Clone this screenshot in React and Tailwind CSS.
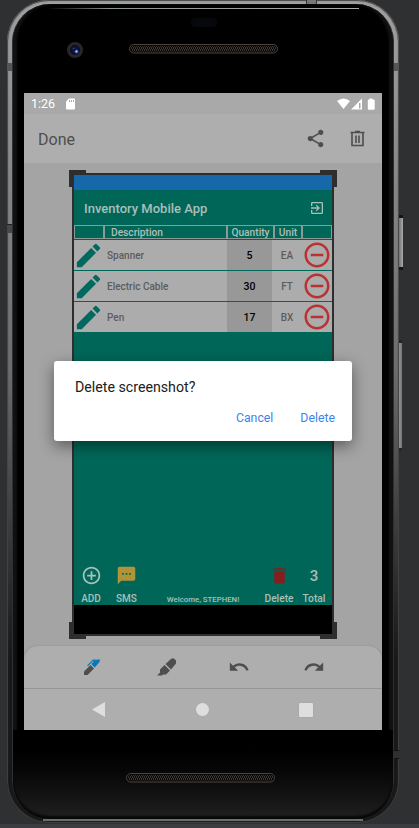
const ROWS = [
  { name: 'Spanner', qty: 5, unit: 'EA' },
  { name: 'Electric Cable', qty: 30, unit: 'FT' },
  { name: 'Pen', qty: 17, unit: 'BX' },
];

function Icon({ d, className }) {
  return (
    <svg viewBox="0 0 24 24" className={`shrink-0 fill-current ${className}`}>
      <path d={d} />
    </svg>
  );
}

const PENCIL = 'M3 17.25V21h3.75L17.81 9.94l-3.75-3.75L3 17.25zM20.71 7.04a1 1 0 0 0 0-1.41l-2.34-2.34a1 1 0 0 0-1.41 0l-1.83 1.83 3.75 3.75 1.83-1.83z';
const SHARE = 'M18 16.08c-.76 0-1.44.3-1.96.77L8.91 12.7c.05-.23.09-.46.09-.7s-.04-.47-.09-.7l7.05-4.11c.54.5 1.25.81 2.04.81 1.66 0 3-1.34 3-3s-1.34-3-3-3-3 1.34-3 3c0 .24.04.47.09.7L8.04 9.81C7.5 9.31 6.79 9 6 9c-1.66 0-3 1.34-3 3s1.34 3 3 3c.79 0 1.5-.31 2.04-.81l7.12 4.16c-.05.21-.08.43-.08.65 0 1.61 1.31 2.92 2.92 2.92s2.92-1.31 2.92-2.92-1.31-2.92-2.92-2.92z';
const UNDO = 'M12.5 8c-2.65 0-5.05.99-6.9 2.6L2 7v9h9l-3.62-3.62c1.39-1.16 3.16-1.88 5.12-1.88 3.54 0 6.55 2.31 7.6 5.5l2.37-.78C21.08 11.03 17.15 8 12.5 8z';
const REDO = 'M18.4 10.6C16.55 8.99 14.15 8 11.5 8c-4.65 0-8.58 3.03-9.96 7.22L3.9 16c1.05-3.19 4.05-5.5 7.6-5.5 1.95 0 3.73.72 5.12 1.88L13 16h9V7l-3.6 3.6z';
const EXIT = 'M10.09 15.59 11.5 17l5-5-5-5-1.41 1.41L12.67 11H3v2h9.67l-2.58 2.59zM19 3H5a2 2 0 0 0-2 2v4h2V5h14v14H5v-4H3v4a2 2 0 0 0 2 2h14a2 2 0 0 0 2-2V5a2 2 0 0 0-2-2z';
const ADD = 'M13 7h-2v4H7v2h4v4h2v-4h4v-2h-4V7zm-1-5C6.48 2 2 6.48 2 12s4.48 10 10 10 10-4.48 10-10S17.52 2 12 2zm0 18c-4.41 0-8-3.59-8-8s3.59-8 8-8 8 3.59 8 8-3.59 8-8 8z';
const REMOVE = 'M7 11v2h10v-2H7zm5-9C6.48 2 2 6.48 2 12s4.48 10 10 10 10-4.48 10-10S17.52 2 12 2zm0 18c-4.41 0-8-3.59-8-8s3.59-8 8-8 8 3.59 8 8-3.59 8-8 8z';
const SMS = 'M20 2H4a2 2 0 0 0-2 2v18l4-4h14a2 2 0 0 0 2-2V4a2 2 0 0 0-2-2zM9 11H7V9h2v2zm4 0h-2V9h2v2zm4 0h-2V9h2v2z';
const TRASH = 'M6 19a2 2 0 0 0 2 2h8a2 2 0 0 0 2-2V7H6v12zM19 4h-3.5l-1-1h-5l-1 1H5v2h14V4z';

function Speaker() {
  return (
    <svg width="149" height="10" viewBox="0 0 149 10">
      <defs>
        <pattern id="mesh" width="4" height="4" patternUnits="userSpaceOnUse">
          <path d="M0 0l2 2-2 2M2 0l2 2-2 2" fill="none" stroke="#4c443c" strokeWidth=".8" />
        </pattern>
      </defs>
      <rect x=".5" y=".5" width="148" height="8.5" rx="4.2" fill="#080706" stroke="#4b463f" />
      <rect x="2" y="2" width="145" height="5.6" rx="2.8" fill="url(#mesh)" />
    </svg>
  );
}

function StatusBar() {
  return (
    <div className="flex h-[21px] items-center bg-[#a9a9a9] pl-[7px] pr-[7px] text-white">
      <span className="w-[35px] pt-[2px] text-[12.5px] leading-none">1:26</span>
      <svg width="9" height="12" viewBox="0 0 9 12" className="fill-white">
        <path fillRule="evenodd" d="M3 .5h5Q9 .5 9 1.500V10.500Q9 11.500 8 11.500H1Q0 11.500 0 10.500V3.500zM3 2v2h1V2zm2 0v2h1V2zm2 0v2h1V2z" />
      </svg>
      <svg width="38" height="12" viewBox="0 0 38 12" className="ml-auto fill-white">
        <path d="M0 3Q6.500-2 13 3L6.500 11z" />
        <path fillRule="evenodd" d="M25 .5V11.500H14zM22 5v5.500h1.500V5z" />
        <path d="M32.500 .5h3v1H37q.7 0 .7.700V11q0 .7-.7.700h-5.500q-.7 0-.7-.7V2.200q0-.7.700-.7h1z" />
      </svg>
    </div>
  );
}

function AppBar() {
  return (
    <div className="flex h-[49px] items-center bg-[#aeaeae] pl-[14px] pr-[14px] text-[#4e4e4e]">
      <span className="mt-[3px] text-[16px] leading-none">Done</span>
      <Icon d={SHARE} className="ml-auto mr-[21px] size-[21px]" />
      <svg width="21" height="20" viewBox="0 0 21 20" fill="none" stroke="currentColor" strokeWidth="1.600">
        <path d="M3.500 3.500h14M8 2.500h5M5 4v12.500h11V4M9 6.500v7.500M12 6.500v7.500" />
      </svg>
    </div>
  );
}

function InventoryTable() {
  return (
    <div className="text-[10px] font-medium leading-none">
      <div className="flex h-[15px] border-b border-[#006256] text-[#adbfba]">
        <div className="w-[31px] border border-[#8c9a96] border-r-2" />
        <div className="flex w-[121px] items-center border-y border-[#8c9a96] pl-[6px] pt-[3px] text-[10.2px]">Description</div>
        <div className="flex w-[47px] items-center justify-center border-y border-l-2 border-[#8c9a96] pt-[3px] text-[10.2px]">Quantity</div>
        <div className="flex w-[30px] items-center justify-center border-y border-x-2 border-[#8c9a96] pt-[3px] text-[10.2px]">Unit</div>
        <div className="w-[29px] border-y border-r border-[#8c9a96]" />
      </div>
      <div className="flex flex-col gap-px">
        {ROWS.map((row) => (
          <div key={row.name} className="flex h-[30px] items-center bg-[#acacac] text-[#5c5c5c]">
            <Icon d={PENCIL} className="-ml-px size-[31px] text-[#006960]" />
            <span className="w-[123px] pl-[3px] pt-[2px] text-[10px]">{row.name}</span>
            <span className="flex h-full w-[45px] items-center justify-center bg-[#989898] pt-[2px] text-[10.5px] text-black">{row.qty}</span>
            <span className="w-[30px] pt-[2px] text-center">{row.unit}</span>
            <Icon d={REMOVE} className="-mr-px size-[30px] text-[#b83232]" />
          </div>
        ))}
      </div>
    </div>
  );
}

function Footer() {
  return (
    <div className="mt-auto flex h-[40px] text-[10px] font-medium leading-none text-[#a9bfba]">
      <div className="flex w-[34px] flex-col items-center justify-between pb-px">
        <Icon d={ADD} className="size-[21px]" />
        <span>ADD</span>
      </div>
      <div className="flex w-[37px] flex-col items-center justify-between pb-px">
        <Icon d={SMS} className="size-[21px] text-[#b1943a]" />
        <span>SMS</span>
      </div>
      <div className="flex w-[116px] items-end justify-center pb-px text-[7.800px]">Welcome, STEPHEN!</div>
      <div className="flex w-[36px] flex-col items-center justify-between pb-px">
        <Icon d={TRASH} className="size-[21px] text-[#851e1e]" />
        <span className="text-[10.200px]">Delete</span>
      </div>
      <div className="flex w-[34px] flex-col items-center justify-between pb-px">
        <span className="pt-[4px] text-[15px]">3</span>
        <span className="text-[10.200px]">Total</span>
      </div>
    </div>
  );
}

function Capture() {
  return (
    <div className="relative ml-[48px] h-[463px] w-[262px] border-2 border-[#2e2e2e]">
      <div className="absolute -left-[5px] -top-[5px] size-[17px] border-l-[3px] border-t-[3px] border-[#2e2e2e]" />
      <div className="absolute -right-[5px] -top-[5px] size-[17px] border-r-[3px] border-t-[3px] border-[#2e2e2e]" />
      <div className="absolute -bottom-[5px] -left-[5px] size-[17px] border-b-[3px] border-l-[3px] border-[#2e2e2e]" />
      <div className="absolute -bottom-[5px] -right-[5px] size-[17px] border-b-[3px] border-r-[3px] border-[#2e2e2e]" />
      <div className="flex h-full flex-col bg-[#006758]">
        <div className="h-[15px] shrink-0 bg-[#1768aa]" />
        <div className="flex h-[35px] shrink-0 items-center justify-between pl-[10px] pr-[7px] text-[#a9bfba]">
          <span className="pt-[2px] text-[13px] font-medium leading-none">Inventory Mobile App</span>
          <Icon d={EXIT} className="size-[16px]" />
        </div>
        <InventoryTable />
        <Footer />
        <div className="h-[29px] shrink-0 bg-black" />
      </div>
    </div>
  );
}

function Tools() {
  return (
    <div className="flex h-[42px] items-center rounded-t-[14px] bg-[#aeaeae] pl-[57px] text-[#4e4e4e] shadow-[0_0_2px_#888]">
      <svg width="24" height="24" viewBox="0 0 24 24" className="mr-[50px]">
        <path d="M3 20v-3.500l6.500-6.500 3.500 3.500L6.500 20z" fill="#4e4e4e" />
        <path d="M6 10.500 12 4.500h3l-.8 1.200L16 4.500h3L18.500 7 13.800 12.500 10.300 9l2.400-2.400-.7-.6L7.200 11z" fill="#0878b5" />
      </svg>
      <svg width="24" height="24" viewBox="0 0 24 24" fill="currentColor" className="mr-[49px]">
        <path d="M2 20.500l3-3v-3l4.500-4.500 5.500 5.500-4 4H8l-1 1zM10.500 9L16.500 3.500h2.500l2 2v3L16 14.500z" />
      </svg>
      <Icon d={UNDO} className="mr-[53px] size-[22px]" />
      <Icon d={REDO} className="size-[22px]" />
    </div>
  );
}

function NavBar() {
  return (
    <div className="flex h-[42px] items-center border-t border-[#969696] bg-[#aeaeae] pl-[68px]">
      <svg width="13" height="15" viewBox="0 0 13 15" className="mr-[91px] fill-[#dedede]"><path d="M13 0v15L0 7.500z" /></svg>
      <div className="mr-[90px] size-[13px] rounded-full bg-[#dedede]" />
      <div className="size-[14px] rounded-[1px] bg-[#dedede] shadow-[0_0_1px_#888]" />
    </div>
  );
}

function Dialog() {
  return (
    <div className="absolute left-[30px] top-[268px] flex h-[80px] w-[298px] flex-col justify-between rounded-[3px] bg-white pb-[15px] pl-[21px] pr-[17px] pt-[18px] shadow-[0_5px_15px_rgba(0,0,0,0.45)]">
      <span className="text-[14.200px] leading-[16px] text-[#202020]">Delete screenshot?</span>
      <div className="flex justify-end gap-[27px] text-[12.300px] leading-[15px] text-[#3d82ea]">
        <span>Cancel</span>
        <span>Delete</span>
      </div>
    </div>
  );
}

export default function App() {
  return (
    <div className="relative h-[828px] w-[419px] overflow-hidden bg-[#2f3032] font-['Roboto',sans-serif]">
      <div className="absolute inset-x-0 bottom-0 h-[4px] bg-[#3b3d41]" />
      <div className="absolute left-[398px] top-[215px] h-[55px] w-[5px] border-y-[3px] border-[#151515] bg-gradient-to-r from-[#666] to-[#aaa]" />
      <div className="absolute left-[398px] top-[340px] h-[111px] w-[4px] border-y-[3px] border-[#252525] bg-gradient-to-r from-[#999] to-[#777]" />
      <div className="relative ml-[7px] h-[823px] w-[392px] rounded-[42px] bg-gradient-to-b from-[#a0a0a0] via-[#6c6c6c] via-45% to-[#181818] to-80% px-[5px] pb-[4px] pt-[4px] shadow-[inset_0_0_1px_1px_#444]">
        <div className="absolute inset-x-[36px] bottom-[2px] h-[2px] bg-[#6e6e6e]" />
        <div className="absolute left-0 top-[63px] h-[8px] w-[6px] bg-[#555]" />
        <div className="absolute right-0 top-[63px] h-[8px] w-[6px] bg-[#555]" />
        <div className="absolute left-0 top-[224px] h-[9px] w-[6px] border-t border-[#222] bg-[#484848]" />
        <div className="absolute right-0 top-[750px] h-[9px] w-[6px] border-y border-[#111] bg-[#303030]" />
        <div className="absolute left-[299px] top-0 h-[4px] w-[11px] border-x border-[#333] bg-[#777]" />
        <div className="relative flex h-full flex-col rounded-[38px] border-x border-[#303030] bg-black px-[11px] shadow-[inset_4px_0_2px_#111,inset_-4px_0_2px_#111]">
          <div className="absolute inset-x-[34px] top-[4px] h-px bg-gradient-to-r from-transparent via-[#8b9391] via-20% to-[#aaa]" />
          <div className="flex h-[89px] shrink-0 items-start">
            <div className="ml-[43px] mt-[38px] flex size-[16px] items-center justify-center rounded-full border-[3px] border-[#292728] bg-[#080c20]">
              <svg width="10" height="10" viewBox="0 0 10 10">
                <circle cx="5" cy="5" r="4" fill="#0b1435" />
                <circle cx="6.500" cy="6.500" r="2" fill="#344fc0" />
                <circle cx="6.500" cy="6.500" r="1" fill="#b7c9ff" />
                <circle cx="3.500" cy="3.500" r=".8" fill="#3049aa" />
              </svg>
            </div>
            <div className="ml-[46px] mt-[14px] flex flex-col items-center gap-[17px]">
              <div className="h-[9px] w-[26px] rounded-[5px] bg-[#07080c]" />
              <Speaker />
            </div>
          </div>
          <div className="relative flex h-[637px] w-[358px] shrink-0 flex-col overflow-hidden bg-[#a4a4a4]">
            <StatusBar />
            <AppBar />
            <div className="h-[483px] shrink-0 pt-[10px]"><Capture /></div>
            <Tools />
            <NavBar />
            <Dialog />
          </div>
          <div className="-mx-[11px] flex-1 rounded-b-[37px] bg-gradient-to-b from-black via-[#050505] via-40% to-[#202020] pl-[113px] pt-[43px] shadow-[inset_0_-3px_2px_#080808]">
            <Speaker />
          </div>
        </div>
      </div>
    </div>
  );
}
